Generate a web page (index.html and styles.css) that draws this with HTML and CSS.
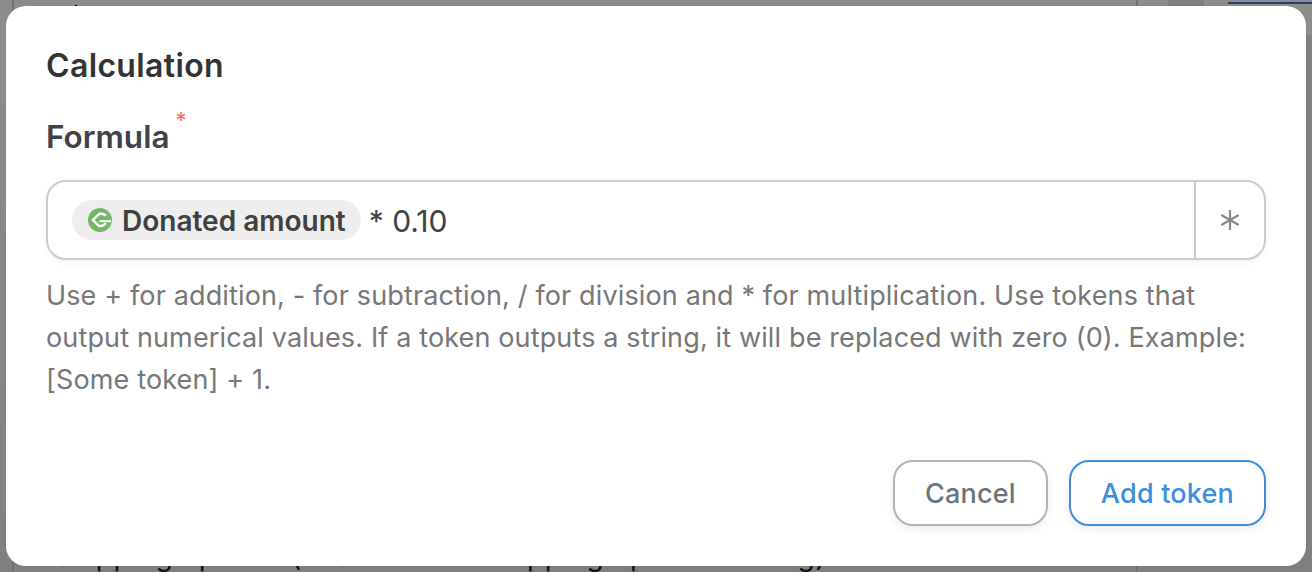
FILE: index.html
```html
<!DOCTYPE html>
<html lang="en">
<head>
    <meta charset="UTF-8">
    <meta name="viewport" content="width=device-width, initial-scale=1.0">
    <title>Calculation</title>
    <link rel="stylesheet" href="styles.css">
</head>
<body>
    <div class="page">
        <div class="page-top">
            <span class="page-label">Size amount</span>
            <span class="page-required">*</span>
        </div>
        <div class="page-bottom">Shipping options (Enable in the shipping options setting)</div>
        <div class="page-rule page-rule-left"></div>
        <div class="page-rule page-rule-right"></div>
        <div class="page-panel"></div>
        <div class="page-header-end"></div>
        <div class="page-tab-line"></div>
    </div>

    <div class="overlay">
        <div class="modal">
            <h2 class="modal-title">Calculation</h2>

            <div class="field-label">
                <span>Formula</span>
                <span class="required">*</span>
            </div>

            <div class="formula-input">
                <div class="formula-value">
                    <span class="token">
                        <svg class="token-icon" viewBox="0 0 24 24">
                            <circle cx="12" cy="12" r="12" fill="#76b869"/>
                            <path d="M18 7.500A8 8 0 0 0 11 6L5 12l6 6a8 8 0 0 0 7-3" stroke="#fff" stroke-width="2.400" fill="none"/>
                            <path d="M11.500 13.200H23" stroke="#fff" stroke-width="2" fill="none"/>
                        </svg>
                        Donated amount
                    </span>
                    <span class="formula-text">* 0.10</span>
                </div>
                <div class="formula-addon">
                    <svg class="asterisk-icon" viewBox="0 0 20 20">
                        <path d="M10 0v20M1.300 5l17.400 10M18.700 5L1.300 15" stroke="#888" stroke-width="2.200" fill="none"/>
                    </svg>
                </div>
            </div>

            <p class="help-text">Use + for addition, - for subtraction, / for division and * for multiplication. Use tokens that output numerical values. If a token outputs a string, it will be replaced with zero (0). Example: [Some token] + 1.</p>

            <div class="modal-actions">
                <button class="btn btn-cancel">Cancel</button>
                <button class="btn btn-primary">Add token</button>
            </div>
        </div>
    </div>
</body>
</html>
```

FILE: styles.css
```css
html, body {
    margin: 0;
    height: 100%;
    overflow: hidden;
}
body {
    font-family: 'Inter', 'Liberation Sans', sans-serif;
    position: relative;
    width: 1312px;
    height: 572px;
}
.page {
    position: absolute;
    inset: 0;
    background: linear-gradient(#fff, #e8e8e8);
    overflow: hidden;
    color: #222;
}
.page-top {
    position: absolute;
    top: 0;
    left: 56px;
    width: 212px;
    display: flex;
    justify-content: space-between;
    font-size: 26px;
    line-height: 32px;
}
.page-required {
    margin-top: -26px;
    color: #d33;
}
.page-tab-line {
    position: absolute;
    top: 2px;
    right: 0;
    width: 84px;
    height: 2px;
    background: #3d7fd0;
}
.page-bottom {
    position: absolute;
    top: 540px;
    left: 53px;
    font-size: 28px;
    line-height: 32px;
    letter-spacing: 0.5px;
    white-space: nowrap;
}
.page-rule {
    position: absolute;
    top: 0;
    bottom: 0;
    width: 2px;
    background: #ccc;
}
.page-rule-left {
    left: 12px;
}
.page-rule-right {
    left: 1136px;
}
.page-panel {
    position: absolute;
    top: 0;
    bottom: 0;
    left: 1168px;
    right: 0;
    background: #e8e8e8;
}
.page-header-end {
    position: absolute;
    top: 0;
    left: 1204px;
    right: 0;
    height: 35px;
    background: #fff;
}
.overlay {
    position: absolute;
    inset: 0;
    box-sizing: border-box;
    padding: 6px;
    display: flex;
    background-color: rgba(0, 0, 0, 0.45);
}
.modal {
    flex: 1;
    background-color: #fff;
    border-radius: 20px;
    padding: 41px 40px 40px 40px;
    display: flex;
    flex-direction: column;
}
.modal-title {
    margin: 0;
    font-size: 32px;
    line-height: 38px;
    font-weight: 600;
    letter-spacing: 0.35px;
    color: #333;
}
.field-label {
    margin-top: 33px;
    display: flex;
    align-items: flex-start;
    font-size: 31.5px;
    line-height: 38px;
    font-weight: 600;
    color: #3f4349;
}
.required {
    margin-left: 6px;
    margin-top: -10px;
    font-size: 22px;
    line-height: 24px;
    font-weight: 400;
    color: #e8706e;
}
.formula-input {
    margin-top: 24px;
    height: 80px;
    box-sizing: border-box;
    border: 2px solid #ccc;
    border-radius: 20px;
    display: flex;
    box-shadow: 0 2px 6px rgba(0, 0, 0, 0.06);
}
.formula-value {
    flex: 1;
    display: flex;
    align-items: center;
    padding-left: 24px;
    gap: 8px;
}
.token {
    display: flex;
    align-items: center;
    gap: 10px;
    height: 40px;
    box-sizing: border-box;
    padding: 2px 15px 0 16px;
    border-radius: 20px;
    background-color: #eee;
    font-size: 28px;
    font-weight: 600;
    color: #404040;
}
.token-icon {
    width: 24px;
    height: 24px;
    margin-top: -2px;
}
.formula-text {
    padding-top: 2px;
    font-size: 30px;
    color: #404040;
}
.formula-addon {
    width: 68px;
    border-left: 2px solid #ccc;
    display: flex;
    align-items: center;
    justify-content: center;
}
.asterisk-icon {
    width: 20px;
    height: 20px;
}
.help-text {
    margin: 15px 0 0;
    font-size: 27px;
    line-height: 42px;
    letter-spacing: 0.14px;
    color: #777;
}
.modal-actions {
    margin-top: auto;
    display: flex;
    justify-content: flex-end;
    gap: 21px;
}
.btn {
    height: 66px;
    box-sizing: border-box;
    padding: 0 30px;
    background-color: #fff;
    border: 2px solid #b3b3b3;
    border-radius: 20px;
    font-family: inherit;
    font-size: 27px;
    letter-spacing: 0.2px;
    font-weight: 500;
    box-shadow: 0 3px 8px rgba(0, 0, 0, 0.08);
}
.btn-cancel {
    color: #6c757d;
}
.btn-primary {
    color: #3d8de0;
    border-color: #3d8de0;
}
```
